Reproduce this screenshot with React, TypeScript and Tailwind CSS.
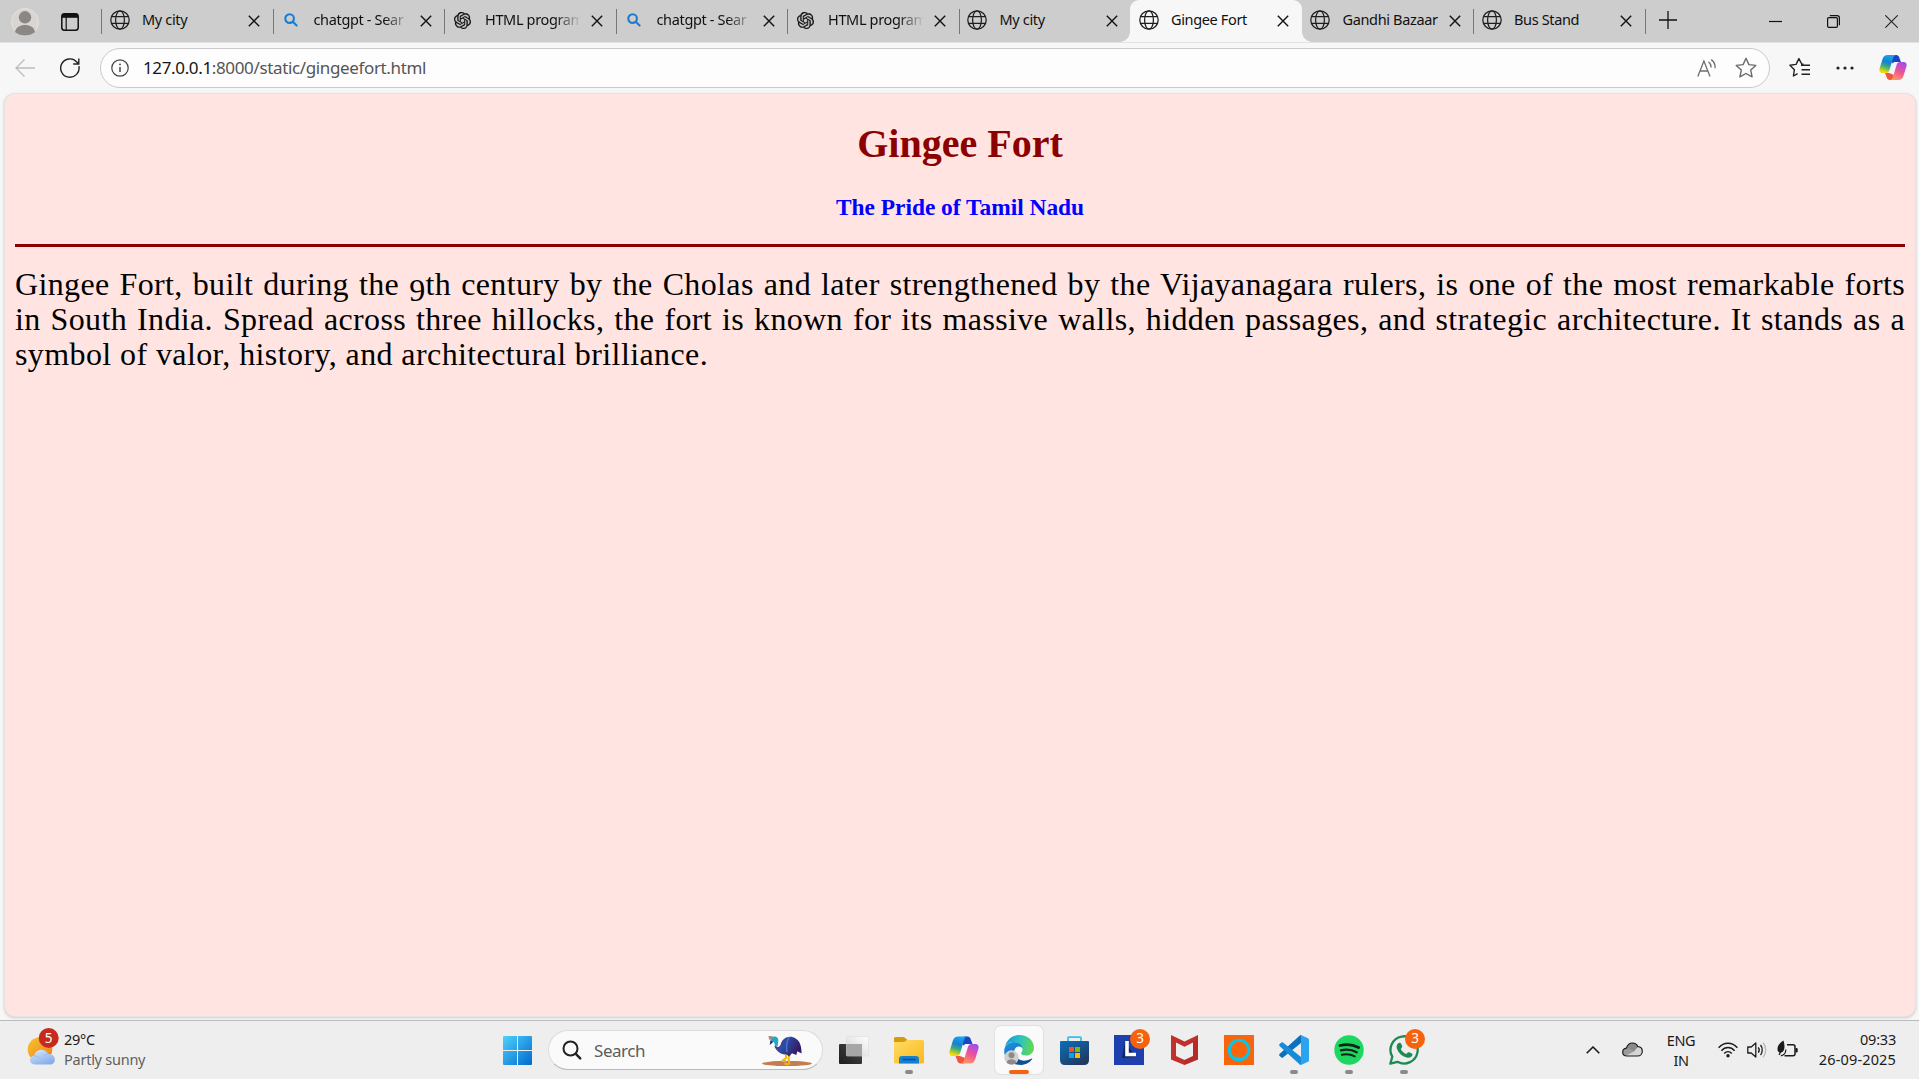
import React from "react";

type IconProps = { className?: string };

function Globe({ className = "" }: IconProps) {
  return (
    <svg viewBox="0 0 20 20" className={`size-5 shrink-0 ${className}`} fill="none" stroke="#1f1f1f" strokeWidth="1.25">
      <circle cx="10" cy="10" r="9.2" />
      <ellipse cx="10" cy="10" rx="4.4" ry="9.2" />
      <path d="M1.6 6.6H18.4M1.6 13.4H18.4" />
    </svg>
  );
}

function SearchBlue() {
  return (
    <svg viewBox="0 0 14 14" className="ml-[3px] size-3.5 shrink-0" fill="none" stroke="#1a7bd4" strokeWidth="2.1" strokeLinecap="round">
      <circle cx="5.6" cy="5.6" r="4.3" />
      <path d="M8.8 8.8 12.6 12.6" />
    </svg>
  );
}

function OpenAi() {
  return (
    <svg viewBox="0 0 24 24" className="ml-px size-[17px] shrink-0" fill="#111" stroke="#111" strokeWidth=".35">
      <path d="M22.28 9.82a5.98 5.98 0 0 0-.51-4.91 6.05 6.05 0 0 0-6.51-2.9A6.07 6.07 0 0 0 4.98 4.18a5.98 5.98 0 0 0-4 2.9 6.05 6.05 0 0 0 .75 7.1 5.98 5.98 0 0 0 .51 4.91 6.05 6.05 0 0 0 6.51 2.9A5.98 5.98 0 0 0 13.26 24a6.06 6.06 0 0 0 5.77-4.21 5.99 5.99 0 0 0 4-2.9 6.06 6.06 0 0 0-.75-7.07zm-9.02 12.61a4.48 4.48 0 0 1-2.88-1.04l.14-.08 4.78-2.76a.8.8 0 0 0 .39-.68v-6.74l2.02 1.17a.07.07 0 0 1 .04.05v5.58a4.5 4.5 0 0 1-4.49 4.5zM3.6 18.3a4.47 4.47 0 0 1-.53-3.01l.14.09 4.78 2.76a.77.77 0 0 0 .78 0l5.84-3.37v2.33a.08.08 0 0 1-.03.06L9.74 19.95A4.5 4.5 0 0 1 3.6 18.3zM2.34 7.9a4.49 4.49 0 0 1 2.37-1.98v5.68a.77.77 0 0 0 .39.68l5.81 3.35-2.02 1.17a.08.08 0 0 1-.07 0l-4.83-2.79A4.5 4.5 0 0 1 2.34 7.87zm16.6 3.86-5.84-3.39 2.02-1.16a.08.08 0 0 1 .07 0l4.83 2.79a4.49 4.49 0 0 1-.68 8.1v-5.68a.79.79 0 0 0-.4-.66zm2.01-3.02-.14-.09-4.77-2.78a.78.78 0 0 0-.79 0L9.41 9.23V6.9a.07.07 0 0 1 .03-.06l4.83-2.79a4.5 4.5 0 0 1 6.68 4.66zM8.31 12.86l-2.02-1.16a.08.08 0 0 1-.04-.06V6.07a4.5 4.5 0 0 1 7.38-3.45l-.14.08-4.78 2.76a.8.8 0 0 0-.4.68zm1.1-2.36 2.6-1.5 2.6 1.5v3l-2.6 1.5-2.6-1.5z" />
    </svg>
  );
}

function TabClose() {
  return (
    <svg viewBox="0 0 12 12" className="size-3 shrink-0" fill="none" stroke="#111" strokeWidth="1.4">
      <path d="M.8.8 11.2 11.2M11.2.8.8 11.2" />
    </svg>
  );
}

type Tab = { icon: "globe" | "search" | "openai"; title: string; fade?: boolean; active?: boolean; divider?: boolean };

const tabs: Tab[] = [
  { icon: "globe", title: "My city", divider: true },
  { icon: "search", title: "chatgpt - Sear", fade: true, divider: true },
  { icon: "openai", title: "HTML program", fade: true, divider: true },
  { icon: "search", title: "chatgpt - Sear", fade: true, divider: true },
  { icon: "openai", title: "HTML program", fade: true, divider: true },
  { icon: "globe", title: "My city", divider: true },
  { icon: "globe", title: "Gingee Fort", active: true },
  { icon: "globe", title: "Gandhi Bazaar" },
  { icon: "globe", title: "Bus Stand", divider: true },
];

function BrowserTab({ tab }: { tab: Tab }) {
  return (
    <div className={`relative flex h-[42px] w-[171.5px] shrink-0 items-start ${tab.active ? "z-10 rounded-t-[9px] bg-[#f7f7f7]" : ""}`}>
      {tab.active && (
        <>
          <span className="absolute bottom-0 -left-2.5 size-2.5 bg-[radial-gradient(circle_at_0_0,#cdcdcd_9.5px,#f7f7f7_10px)]" />
          <span className="absolute -right-2.5 bottom-0 size-2.5 bg-[radial-gradient(circle_at_100%_0,#cdcdcd_9.5px,#f7f7f7_10px)]" />
        </>
      )}
      <span className={`mt-[9px] h-[25px] w-px shrink-0 ${tab.divider ? "bg-[#777]" : ""}`} />
      <div className="ml-[7.5px] flex h-10 w-[32.5px] shrink-0 items-center">
        {tab.icon === "globe" && <Globe />}
        {tab.icon === "search" && <SearchBlue />}
        {tab.icon === "openai" && <OpenAi />}
      </div>
      <div
        className={`h-10 w-[97px] shrink-0 text-[14.5px] leading-[39px] tracking-[-0.35px] whitespace-nowrap text-[#111] ${
          tab.fade ? "[mask-image:linear-gradient(90deg,#000_72%,transparent_99%)]" : ""
        }`}
      >
        {tab.title}
      </div>
      <div className="ml-[9px] flex h-[41px] items-center">
        <TabClose />
      </div>
    </div>
  );
}

function CopilotLogo({ id, className = "" }: { id: string; className?: string }) {
  return (
    <svg viewBox="0 0 30 28" className={className}>
      <defs>
        <linearGradient id={`${id}a`} x1="0.6" y1="0" x2="0.3" y2="1">
          <stop offset="0" stopColor="#1aa5ea" />
          <stop offset="0.4" stopColor="#1480d8" />
          <stop offset="0.65" stopColor="#3fae74" />
          <stop offset="0.95" stopColor="#f5d90a" />
        </linearGradient>
        <linearGradient id={`${id}b`} x1="0.7" y1="0" x2="0.3" y2="1">
          <stop offset="0" stopColor="#a04cf0" />
          <stop offset="0.5" stopColor="#ee5397" />
          <stop offset="1" stopColor="#ff9a62" />
        </linearGradient>
      </defs>
      <path d="M15 .5h3.6c1.5 0 2.5 1 3 2.4L23.5 8h-4c-1.9 0-2.8 1-3.3 2.6L13 8Z" fill="#1747c7" />
      <path d="M15 27.5h-3.6c-1.5 0-2.5-1-3-2.4L6.5 20h4c1.9 0 2.8-1 3.3-2.6L17 20Z" fill="#f2553d" />
      <path d="M16 8h5l-3 10-2 4-5-2 3-9Z" fill="#f6f5fa" />
      <path d="M9.2.5h9.4c-2 0-3 1.5-3.5 3.2l-4 13.3c-.6 2-1.8 3-3.8 3H3.5C.8 20-.1 17.6.6 15.2L4 4.3C4.800 1.900 6.500.5 9.200.5Z" fill={`url(#${id}a)`} />
      <path d="M20.800 27.500h-9.400c2 0 3-1.500 3.500-3.200l4-13.300c.6-2 1.800-3 3.800-3h3.800c2.700 0 3.600 2.400 2.900 4.800L26 23.700c-.8 2.400-2.500 3.800-5.200 3.800Z" fill={`url(#${id}b)`} />
    </svg>
  );
}

function TabStrip() {
  return (
    <div className="flex h-[42px] bg-[#cdcdcd]">
      <div className="flex w-[101px] shrink-0 items-center pt-px pl-[11px]">
        <svg viewBox="0 0 28 28" className="size-7 shrink-0">
          <circle cx="14" cy="14" r="13.5" fill="#d9d6d2" stroke="#e4e2df" />
          <circle cx="14" cy="9.3" r="6.2" fill="#8b8784" />
          <path d="M4 24c1-5 5-7 10-7s9 2 10 7c-5.500 4.700-14.500 4.700-20 0Z" fill="#8b8784" />
        </svg>
        <svg viewBox="0 0 18 18" className="ml-[22px] size-[18px] shrink-0" fill="none" stroke="#111" strokeWidth="1.5">
          <rect x=".8" y=".8" width="16.4" height="16.4" rx="2.800" />
          <path d="M1 2.800h16" strokeWidth="4" />
          <path d="M5.200 4v13" strokeWidth="1.200" />
        </svg>
      </div>
      {tabs.map((tab, i) => (
        <BrowserTab key={i} tab={tab} />
      ))}
      <span className="mt-[9px] h-[25px] w-px bg-[#777]" />
      <svg viewBox="0 0 18 18" className="mt-[11px] ml-[13px] size-[18px]" stroke="#111" strokeWidth="1.300">
        <path d="M9 0v18M0 9h18" />
      </svg>
      <div className="ml-auto flex h-[42px] items-center pr-[21px]">
        <svg viewBox="0 0 13 13" className="size-[13px]" stroke="#111" strokeWidth="1.200">
          <path d="M0 6.500h13" />
        </svg>
        <svg viewBox="0 0 13 13" className="ml-[45px] size-[13px]" fill="none" stroke="#111" strokeWidth="1.200">
          <rect x=".6" y="2.600" width="9.800" height="9.800" rx="1.200" />
          <path d="M2.800.6h7.200c1.500 0 2.400.9 2.400 2.400v7.200" />
        </svg>
        <svg viewBox="0 0 13 13" className="ml-[45px] size-[13px]" stroke="#222" strokeWidth="1.100">
          <path d="M.3.3 12.700 12.700M12.700.3.3 12.700" />
        </svg>
      </div>
    </div>
  );
}

function Toolbar() {
  return (
    <div className="flex h-[51px] items-start border-t border-[#e3e3e3] bg-[#f7f7f7] pt-[5px]">
      <div className="flex h-10 w-[100px] shrink-0 items-center pl-[15px]">
        <svg viewBox="0 0 20 18" className="h-[18px] w-5" fill="none" stroke="#bdbdbd" strokeWidth="1.300">
          <path d="M20 9H1M9.500.500 1 9l8.500 8.500" />
        </svg>
        <svg viewBox="0 0 20 20" className="ml-[25px] size-5" fill="none" stroke="#222" strokeWidth="1.400">
          <path d="M18.900 8.200A9.200 9.200 0 1 1 16.800 4l1.700 1.800M18.800.500v5.500h-5.600" />
        </svg>
      </div>
      <div className="flex h-10 w-[1670px] shrink-0 items-center rounded-full border border-[#cacaca] bg-[#fdfdfd] pr-3 pl-[10px]">
        <svg viewBox="0 0 18 18" className="size-[18px]" fill="none" stroke="#444" strokeWidth="1.200">
          <circle cx="9" cy="9" r="8.200" />
          <path d="M9 8v5" strokeWidth="1.500" />
          <circle cx="9" cy="5.400" r=".9" fill="#444" stroke="none" />
        </svg>
        <span className="ml-[14px] text-[17px] tracking-[-0.36px] whitespace-nowrap text-[#555]">
          <span className="text-[#151515]">127.0.0.1</span>:8000/static/gingeefort.html
        </span>
        <svg viewBox="0 0 20 20" className="mb-px ml-auto size-5" fill="none" stroke="#6e6e6e" strokeWidth="1.300">
          <path d="M.8 18.500 6.900 3l6.100 15.500M3 13h7.800" />
          <path d="M11.500 3.800c1.800 1.400 2.700 3.200 2.700 5.600M14.200 1.600c2.800 2 4.200 5 3.900 8.600" />
        </svg>
        <svg viewBox="0 0 22 22" className="ml-[18px] size-[22px]" fill="none" stroke="#6a6a6a" strokeWidth="1.400" strokeLinejoin="round">
          <path d="m11 1.300 2.900 6.300 6.900.8-5.100 4.700 1.400 6.800L11 16.500l-6.100 3.400 1.400-6.800L1.200 8.400l6.900-.8Z" />
        </svg>
      </div>
      <svg viewBox="0 0 22 22" className="mt-[9px] ml-[19px] size-[22px]" fill="none" stroke="#222" strokeWidth="1.400" strokeLinejoin="round">
        <path d="M14.500 7.300 12.700 7 9.900 1.600 7.100 7.400.9 8.300l4.500 4.400-1 6.300 4.200-2.300M12 8.300h9M12.500 12.800H21M12.500 17.300H21" />
      </svg>
      <svg viewBox="0 0 18 4" className="mt-[18px] ml-[25px] h-1 w-[18px]" fill="#222">
        <circle cx="2" cy="2" r="1.600" />
        <circle cx="9" cy="2" r="1.600" />
        <circle cx="16" cy="2" r="1.600" />
      </svg>
      <CopilotLogo id="toolbar" className="mt-[6px] ml-[25px] h-[27px] w-[28px]" />
    </div>
  );
}

function Article() {
  return (
    <main className="mr-[3px] ml-1 h-[924px] rounded-[11px] border border-[#e6e3e2] bg-[#ffe4e1] px-2.5 font-['Liberation_Serif',serif] shadow-[0_1px_3px_rgba(0,0,0,0.18)]">
      <h1 className="pt-[27px] text-center text-[40px] leading-[46px] font-bold text-[#8b0000]">Gingee Fort</h1>
      <h2 className="mt-[27px] text-center text-[23.4px] leading-[27px] font-bold text-[#0000ff]">The Pride of Tamil Nadu</h2>
      <hr className="mt-[23px] h-[3px] border-0 bg-[#8b0000]" />
      <div className="mt-5 text-[32px] leading-[35px] tracking-[0.36px] whitespace-nowrap text-black">
        <p className="[text-align-last:justify]">
          Gingee Fort, built during the <span className="relative top-[6px]">9</span>th century by the Cholas and later strengthened by the Vijayanagara rulers, is one of the most remarkable forts
        </p>
        <p className="[text-align-last:justify]">
          in South India. Spread across three hillocks, the fort is known for its massive walls, hidden passages, and strategic architecture. It stands as a
        </p>
        <p className="tracking-[0.4px]">symbol of valor, history, and architectural brilliance.</p>
      </div>
    </main>
  );
}

function Weather() {
  return (
    <div className="flex w-[503px] shrink-0 items-start pl-[27px]">
      <svg viewBox="0 0 32 38" className="mt-[5px] h-[38px] w-8 shrink-0">
        <defs>
          <linearGradient id="sun" x1="0" y1="0" x2="1" y2="1">
            <stop offset="0" stopColor="#f6c52f" />
            <stop offset="1" stopColor="#f07d18" />
          </linearGradient>
          <linearGradient id="cloud" x1="0" y1="0" x2="0.600" y2="1">
            <stop offset="0" stopColor="#dcebfb" />
            <stop offset="1" stopColor="#86aee9" />
          </linearGradient>
        </defs>
        <circle cx="13" cy="22.500" r="12.300" fill="url(#sun)" />
        <path d="M8 37.500c-3.300 0-5-1.900-5-4.400 0-2.400 1.700-4.200 4.200-4.500C8 25 10.700 22.800 14.300 22.800c3.200 0 5.700 1.600 6.900 4.200 4-.2 6.600 2.200 6.600 5.400 0 3-2 5.100-5 5.100Z" fill="url(#cloud)" />
        <path d="M7 29c2.600-.3 4.600.8 5.600 2.600M21.200 27c-2.200.1-3.900.9-5 2.600" fill="none" stroke="#8fb2ea" strokeWidth=".7" />
        <circle cx="21.700" cy="11" r="10" fill="#c42b1c" />
        <text x="21.700" y="15.700" textAnchor="middle" fill="#fff" fontSize="13.500">5</text>
      </svg>
      <div className="mt-[7px] ml-[5px] text-[14.5px] leading-5 tracking-[-0.25px]">
        <div className="text-[#1b1b1b]">29°C</div>
        <div className="text-[#5f5f5f]">Partly sunny</div>
      </div>
    </div>
  );
}

function WindowsLogo() {
  return (
    <svg viewBox="0 0 29 29" className="mt-[14px] size-[29px] shrink-0">
      <defs>
        <linearGradient id="win" gradientUnits="userSpaceOnUse" x1="0" y1="0" x2="29" y2="29">
          <stop offset="0" stopColor="#4fd2fb" />
          <stop offset="1" stopColor="#0069cf" />
        </linearGradient>
      </defs>
      <path d="M1 0h13v14H0V1Q0 0 1 0ZM15 0h13q1 0 1 1v13H15ZM0 15h14v14H1q-1 0-1-1ZM15 15h14v13q0 1-1 1H15Z" fill="url(#win)" />
    </svg>
  );
}

function SearchBox() {
  return (
    <div className="mt-[8px] ml-[16px] flex h-[40px] w-[275px] shrink-0 items-center rounded-full border border-[#dcdcdc] border-b-[#b9b9b9] bg-[#fafafa] pl-[13px]">
      <svg viewBox="0 0 20 20" className="size-5" fill="none" stroke="#222" strokeWidth="2" strokeLinecap="round">
        <circle cx="8.500" cy="8.500" r="7" />
        <path d="m13.800 13.800 4.400 4.600" strokeWidth="2.400" />
      </svg>
      <span className="ml-3 text-[17px] leading-none tracking-[-0.45px] text-[#5c5c5c]">Search</span>
      <svg viewBox="0 0 50 32" className="mt-px mr-[10px] ml-auto h-8 w-[50px]">
        <defs>
          <linearGradient id="bird" x1="0" y1="0" x2="1" y2="0.400">
            <stop offset="0" stopColor="#6a2a80" />
            <stop offset="0.450" stopColor="#2d4ba6" />
            <stop offset="1" stopColor="#351a63" />
          </linearGradient>
        </defs>
        <ellipse cx="25" cy="28.500" rx="25" ry="2.600" fill="#c47d4e" />
        <path d="M24 18.500v4.500l-4 3M28 18.500l-1.500 5 1 6M26.500 29.500l-4-1M20 26h4" fill="none" stroke="#f3b50f" strokeWidth="2" />
        <path d="M13.500 9C14 12 16 13.500 18.500 10 20 3.500 25.500.500 31 2.200c5.500 1.700 8.600 6.500 8.600 16.300l-4.300-2.200-1 3.800-4.300-1.800-3 3.200-2.700-2.200c-5 1-10-3.600-11.800-7.600Z" fill="url(#bird)" />
        <path d="M27 2c-2.500 5-3 10-2 15" stroke="#3f77d6" strokeWidth="1.500" fill="none" />
        <path d="M9 3.500C11.500.300 16 1 16.300 5l-.6 6-2.200.4-1.600-4.400-3.400-.5Z" fill="#1fa8c9" />
        <path d="m6.500 1 4.500.3-1.500 3.400-2.500-.2Z" fill="#a88a77" />
        <path d="M8.500 5.200 7.700 10l3.500-3Z" fill="#2c2a66" />
      </svg>
    </div>
  );
}

type AppIcon = { name: string; icon: React.ReactNode; running?: boolean; active?: boolean; badge?: string };

const apps: AppIcon[] = [
  {
    name: "Task view",
    icon: (
      <svg viewBox="0 0 30 30" className="size-[30px]">
        <defs>
          <linearGradient id="tvd" x1="0" y1="1" x2="1" y2="0">
            <stop offset="0" stopColor="#1c1c1c" />
            <stop offset="1" stopColor="#4a4a4a" />
          </linearGradient>
          <linearGradient id="tvl" x1="0" y1="1" x2="1" y2="0">
            <stop offset="0" stopColor="#d2d2d2" />
            <stop offset="1" stopColor="#fff" />
          </linearGradient>
        </defs>
        <rect x="0" y="9" width="23" height="20" rx="1" fill="url(#tvd)" />
        <rect x="7.500" y="1.500" width="22" height="19.500" rx="1" fill="url(#tvl)" fillOpacity=".95" stroke="#dcdcdc" strokeWidth=".6" />
        <path d="M7.500 9H23v12H7.500Z" fill="#a6a6a6" />
      </svg>
    ),
  },
  {
    name: "File Explorer",
    running: true,
    icon: (
      <svg viewBox="0 0 30 30" className="size-[30px]">
        <defs>
          <linearGradient id="fold" x1="0" y1="0" x2="1" y2="1">
            <stop offset="0" stopColor="#ffdc69" />
            <stop offset="1" stopColor="#fbb817" />
          </linearGradient>
        </defs>
        <path d="M0 3.500Q0 2 1.500 2H9q1.200 0 2 .8L13.500 5l-3 3H0Z" fill="#d99a0a" />
        <path d="M0 7h9.500q1 0 1.700-.7l.9-.8q.5-.5 1.500-.5H28.500Q30 5 30 6.500V27q0 1.500-1.500 1.500h-27Q0 28.500 0 27Z" fill="url(#fold)" />
        <path d="M5 28.500V24q0-3 3-3h14q3 0 3 3v4.500Z" fill="#157fd1" />
        <path d="M9 24.500h12" stroke="#0b4f93" strokeWidth="1.300" strokeLinecap="round" />
      </svg>
    ),
  },
  { name: "Copilot", icon: <CopilotLogo id="task" className="h-7 w-[30px]" /> },
  {
    name: "Edge",
    active: true,
    icon: (
      <svg viewBox="0 0 30 30" className="size-[30px]">
        <defs>
          <linearGradient id="ea" x1="0" y1="0.300" x2="1" y2="0.500">
            <stop offset="0" stopColor="#1499d6" />
            <stop offset="0.500" stopColor="#2cc4bd" />
            <stop offset="1" stopColor="#64d94b" />
          </linearGradient>
          <linearGradient id="eb" x1="0" y1="0" x2="0.500" y2="1">
            <stop offset="0" stopColor="#1e9ce6" />
            <stop offset="1" stopColor="#0d5bb0" />
          </linearGradient>
        </defs>
        <path d="M1 12C2.500 5 8 0 15.200 0 24 0 30 6 30 12.700c0 4.600-3.400 7.800-7.800 7.800-2.700 0-5-1-5-2.300 0-.8 1.300-1.400 1.300-3.600C18.500 11 14.500 7 9 7c-4 0-6.800 2.300-8 5Z" fill="url(#ea)" />
        <path d="M.2 16C.2 11 4 7 9.400 7c5 0 8.700 3 9.100 6.500-1-1.500-2.200-2-3.600-2-3 0-5 3-5 6.500 0 5.500 4 10.500 9.500 11.500C9 31.500 0 25 .2 16Z" fill="url(#eb)" />
        <path d="M10.200 15.500c-1 7.500 7 11 12 10 2.800-.5 4-1.500 5.700-2 .4 0 .4.400.2.800C25.500 28 21 30 17 30 12 29.500 8 24 10.200 15.500Z" fill="#124e96" />
        <circle cx="7.500" cy="22.500" r="7.200" fill="#d2d0ce" />
        <circle cx="7.500" cy="20.300" r="3" fill="#8c8986" />
        <path d="M2.700 27.700c.5-2.600 2.400-3.500 4.800-3.500s4.300.9 4.800 3.500c-2.800 2.400-6.800 2.400-9.600 0Z" fill="#8c8986" />
      </svg>
    ),
  },
  {
    name: "Store",
    icon: (
      <svg viewBox="0 0 29 29" className="size-[29px]">
        <defs>
          <linearGradient id="st" x1="0" y1="0" x2="0.700" y2="1">
            <stop offset="0" stopColor="#0a70bd" />
            <stop offset="1" stopColor="#22385f" />
          </linearGradient>
        </defs>
        <path d="M8 6V2q0-.800.8-.8h11.400q.8 0 .8.800v4" fill="none" stroke="#36bff2" strokeWidth="1.800" />
        <path d="M0 6q0-1 1-1h27q1 0 1 1v18q0 5-5 5H5q-5 0-5-5Z" fill="url(#st)" />
        <path d="M9 11h5v5H9Z" fill="#f25022" />
        <path d="M15 11h5v5h-5Z" fill="#7fba00" />
        <path d="M9 17h5v5H9Z" fill="#00a4ef" />
        <path d="M15 17h5v5h-5Z" fill="#ffb900" />
      </svg>
    ),
  },
  {
    name: "L",
    badge: "3",
    icon: (
      <svg viewBox="0 0 30 30" className="size-[30px]">
        <path d="M0 0h30v30H0Z" fill="#1e3fae" />
        <path d="m11 7-3 16 14-1Z" fill="#10265f" />
        <path d="M13 6v13.500h9" fill="none" stroke="#fff" strokeWidth="3.600" />
      </svg>
    ),
  },
  {
    name: "McAfee",
    icon: (
      <svg viewBox="0 0 27 30" className="h-[30px] w-[27px]">
        <path fillRule="evenodd" d="M0 0 13.500 6.500 27 0v24.500L13.500 30 0 24.500ZM5 7.500v13.500l8.500 4 8.500-4V7.500l-8.500 4.300Z" fill="#c1302c" />
        <path d="M22 7.500 27 0v24.500L13.500 30v-5l8.500-4Z" fill="#9f2323" fillOpacity=".3" />
      </svg>
    ),
  },
  {
    name: "Alexa",
    icon: (
      <svg viewBox="0 0 30 30" className="size-[30px]">
        <path d="M0 0h30v30H0Z" fill="#f9650d" />
        <circle cx="15" cy="15" r="9.800" fill="none" stroke="#0bc5e8" strokeWidth="3" />
        <path d="M11 21.500c2.500 1.500 2.800 2.200 2.600 4.500l1.600.1c.2-1.700 1-2.600 3.300-3.600Z" fill="#0bc5e8" />
      </svg>
    ),
  },
  {
    name: "VS Code",
    running: true,
    icon: (
      <svg viewBox="0 0 30 30" className="size-[30px]">
        <path d="M22 0v8L4 22.500q-.9.600-1.700 0L.5 20.800q-.8-.8 0-1.700L20.500.800Q21.200 0 22 0Z" fill="#0b71bd" />
        <path d="M22 30v-8L4 7.500q-.9-.6-1.700 0L.5 9.200q-.8.800 0 1.700l20 18.300q.7.800 1.500.8Z" fill="#168cd8" />
        <path d="M22 0l7 3.200q1 .5 1 1.500v20.600q0 1-1 1.500L22 30q-1 .2-1.600-.6 1.600.4 1.600-1.200V1.800q0-1.600-1.600-1.200Q21 0 22 0Z" fill="#2ba3ee" />
      </svg>
    ),
  },
  {
    name: "Spotify",
    running: true,
    icon: (
      <svg viewBox="0 0 30 30" className="size-[30px]" fill="none" stroke="#10201a" strokeLinecap="round">
        <circle cx="15" cy="15" r="14.700" fill="#1ed760" stroke="none" />
        <path d="M6 10.500c6.500-1.600 13-1 18.600 2" strokeWidth="2.800" />
        <path d="M7 15.300c5.500-1.400 11-.7 15.700 1.900" strokeWidth="2.300" />
        <path d="M7.800 19.700c4.700-1 9-.5 13 1.700" strokeWidth="1.900" />
      </svg>
    ),
  },
  {
    name: "WhatsApp",
    running: true,
    badge: "3",
    icon: (
      <svg viewBox="0 0 30 30" className="size-[30px]">
        <path d="m1.300 28.700 2-7A13.600 13.600 0 1 1 8.500 26.800Z" fill="none" stroke="#1d8a55" strokeWidth="2.300" strokeLinejoin="round" />
        <path d="M10.300 7.800c.7-.300 1.400-.1 1.700.6l1.200 2.700c.2.600 0 1-.4 1.500l-1 1.300c1.200 2.400 3 4.100 5.600 5.200l1.300-1.500c.4-.5.900-.6 1.500-.3l2.600 1.300c.6.300.8.800.6 1.500-.6 2.300-3.200 3.300-5.800 2.500-4.800-1.500-8.300-4.700-9.800-9.200-.7-2.500.3-4.800 2.500-5.600Z" fill="#1d8a55" />
      </svg>
    ),
  },
];

function AppButton({ app }: { app: AppIcon }) {
  return (
    <div
      className={`relative flex size-12 shrink-0 items-center justify-center ${
        app.active ? "rounded-md bg-[#fafafa] shadow-[0_0_1px_1px_rgba(0,0,0,0.06)]" : ""
      }`}
    >
      {app.icon}
      {app.badge && (
        <span className="absolute top-[3px] left-[25px] flex size-5 items-center justify-center rounded-full bg-[#f7630c] text-[13.5px] leading-none text-white">
          {app.badge}
        </span>
      )}
      {app.running && <span className="absolute bottom-0 h-1 w-2 rounded-full bg-[#8a8a8a]" />}
      {app.active && <span className="absolute bottom-0 h-1 w-5 rounded-full bg-[#f7630c]" />}
    </div>
  );
}

function Tray() {
  return (
    <div className="ml-auto flex shrink-0 items-start pr-[23px] text-[14.5px] leading-5 text-[#1b1b1b]">
      <svg viewBox="0 0 14 8" className="mt-6 h-2 w-3.5 shrink-0" fill="none" stroke="#1b1b1b" strokeWidth="1.600">
        <path d="M.7 7.200 7 1l6.300 6.200" />
      </svg>
      <svg viewBox="0 0 21 15" className="mt-[20px] ml-[22px] h-[15px] w-[21px] shrink-0">
        <path d="M5 14c-2.700 0-4.300-1.600-4.300-3.800 0-2.200 1.500-3.700 3.700-4C5.300 3 7.400 1 10.300 1c2.700 0 4.700 1.400 5.600 3.700 2.700.2 4.400 2 4.400 4.500 0 2.700-1.900 4.800-4.700 4.800Z" fill="#d6d6d6" />
        <path d="M1 9.500C1.500 7.500 3 6.300 5 6.200l7 3.300-8.300 4.300C1.500 13 .6 11.500 1 9.500Z" fill="#9a9a9a" />
        <path d="M4.500 6C5.800 2.500 8 1 10.300 1c2.600 0 4.600 1.300 5.600 3.700L12 9.500Z" fill="#8a8a8a" />
        <path d="M5 14c-2.700 0-4.300-1.600-4.300-3.800 0-2.200 1.500-3.700 3.700-4C5.300 3 7.400 1 10.300 1c2.700 0 4.700 1.400 5.600 3.700 2.700.2 4.400 2 4.400 4.500 0 2.700-1.900 4.800-4.700 4.800Z" fill="none" stroke="#1b1b1b" strokeWidth="1.200" />
      </svg>
      <div className="mt-2 ml-[23px] w-[30px] shrink-0 text-center tracking-[-0.4px]">
        <div>ENG</div>
        <div>IN</div>
      </div>
      <svg viewBox="0 0 20 16" className="mt-[20px] ml-[22px] h-4 w-5 shrink-0" fill="none" stroke="#1b1b1b" strokeWidth="1.400">
        <path d="M.600 5.800c5.200-6 13.600-6 18.800 0M3.400 8.700c3.700-4.200 9.500-4.200 13.200 0M6.200 11.500c2.200-2.500 5.400-2.500 7.600 0" />
        <circle cx="10" cy="13.700" r="1.700" fill="#1b1b1b" stroke="none" />
      </svg>
      <svg viewBox="0 0 20 18" className="mt-[19px] ml-[9px] h-[18px] w-5 shrink-0" fill="none" stroke="#1b1b1b" strokeWidth="1.300" strokeLinejoin="round">
        <path d="M.8 6h3.400L8.800 2v14l-4.600-4H.8ZM11.200 6.300c1.200 1.500 1.200 3.900 0 5.400M13.500 4c2.300 2.700 2.300 7.300 0 10" />
        <path d="M16 1.800c3.600 3.900 3.600 10.500 0 14.400" stroke="#b9b9b9" />
      </svg>
      <svg viewBox="0 0 21 18" className="mt-[18px] ml-[10px] h-[18px] w-[21px] shrink-0">
        <path d="M10 4.700H16q2 0 2 2v7q0 2-2 2H7.500" fill="none" stroke="#1b1b1b" strokeWidth="1.500" />
        <path d="M18.500 8h1.200q1 0 1 1v2.500q0 1-1 1h-1.200Z" fill="#1b1b1b" />
        <path d="M6.500.5C2.500 3 .3 6 .5 9.500c.1 1.500.8 2.500 2 3L1.500 15h1.300l1-2.300C7.500 12 8.500 7 6.500.5Z" fill="#1b1b1b" />
        <path d="M8.800 9.500c0 3.500-2 5.800-5 6.300" stroke="#1b1b1b" fill="none" strokeWidth="1.200" />
      </svg>
      <div className="mt-[7px] w-[98px] shrink-0 text-right">
        <div className="tracking-[-0.2px]">09:33</div>
        <div className="tracking-[0.15px]">26-09-2025</div>
      </div>
    </div>
  );
}

function Taskbar() {
  return (
    <footer className="mt-[3px] flex h-[59px] border-t border-[#b9bab9] bg-[#eee] pt-px">
      <Weather />
      <WindowsLogo />
      <SearchBox />
      <div className="mt-1 ml-[7px] flex gap-[7px]">
        {apps.map((app) => (
          <AppButton key={app.name} app={app} />
        ))}
      </div>
      <Tray />
    </footer>
  );
}

export default function App() {
  return (
    <div className="h-[1079px] w-[1919px] overflow-hidden bg-[#f7f7f7] font-['Noto_Sans',sans-serif]">
      <TabStrip />
      <Toolbar />
      <Article />
      <Taskbar />
    </div>
  );
}
